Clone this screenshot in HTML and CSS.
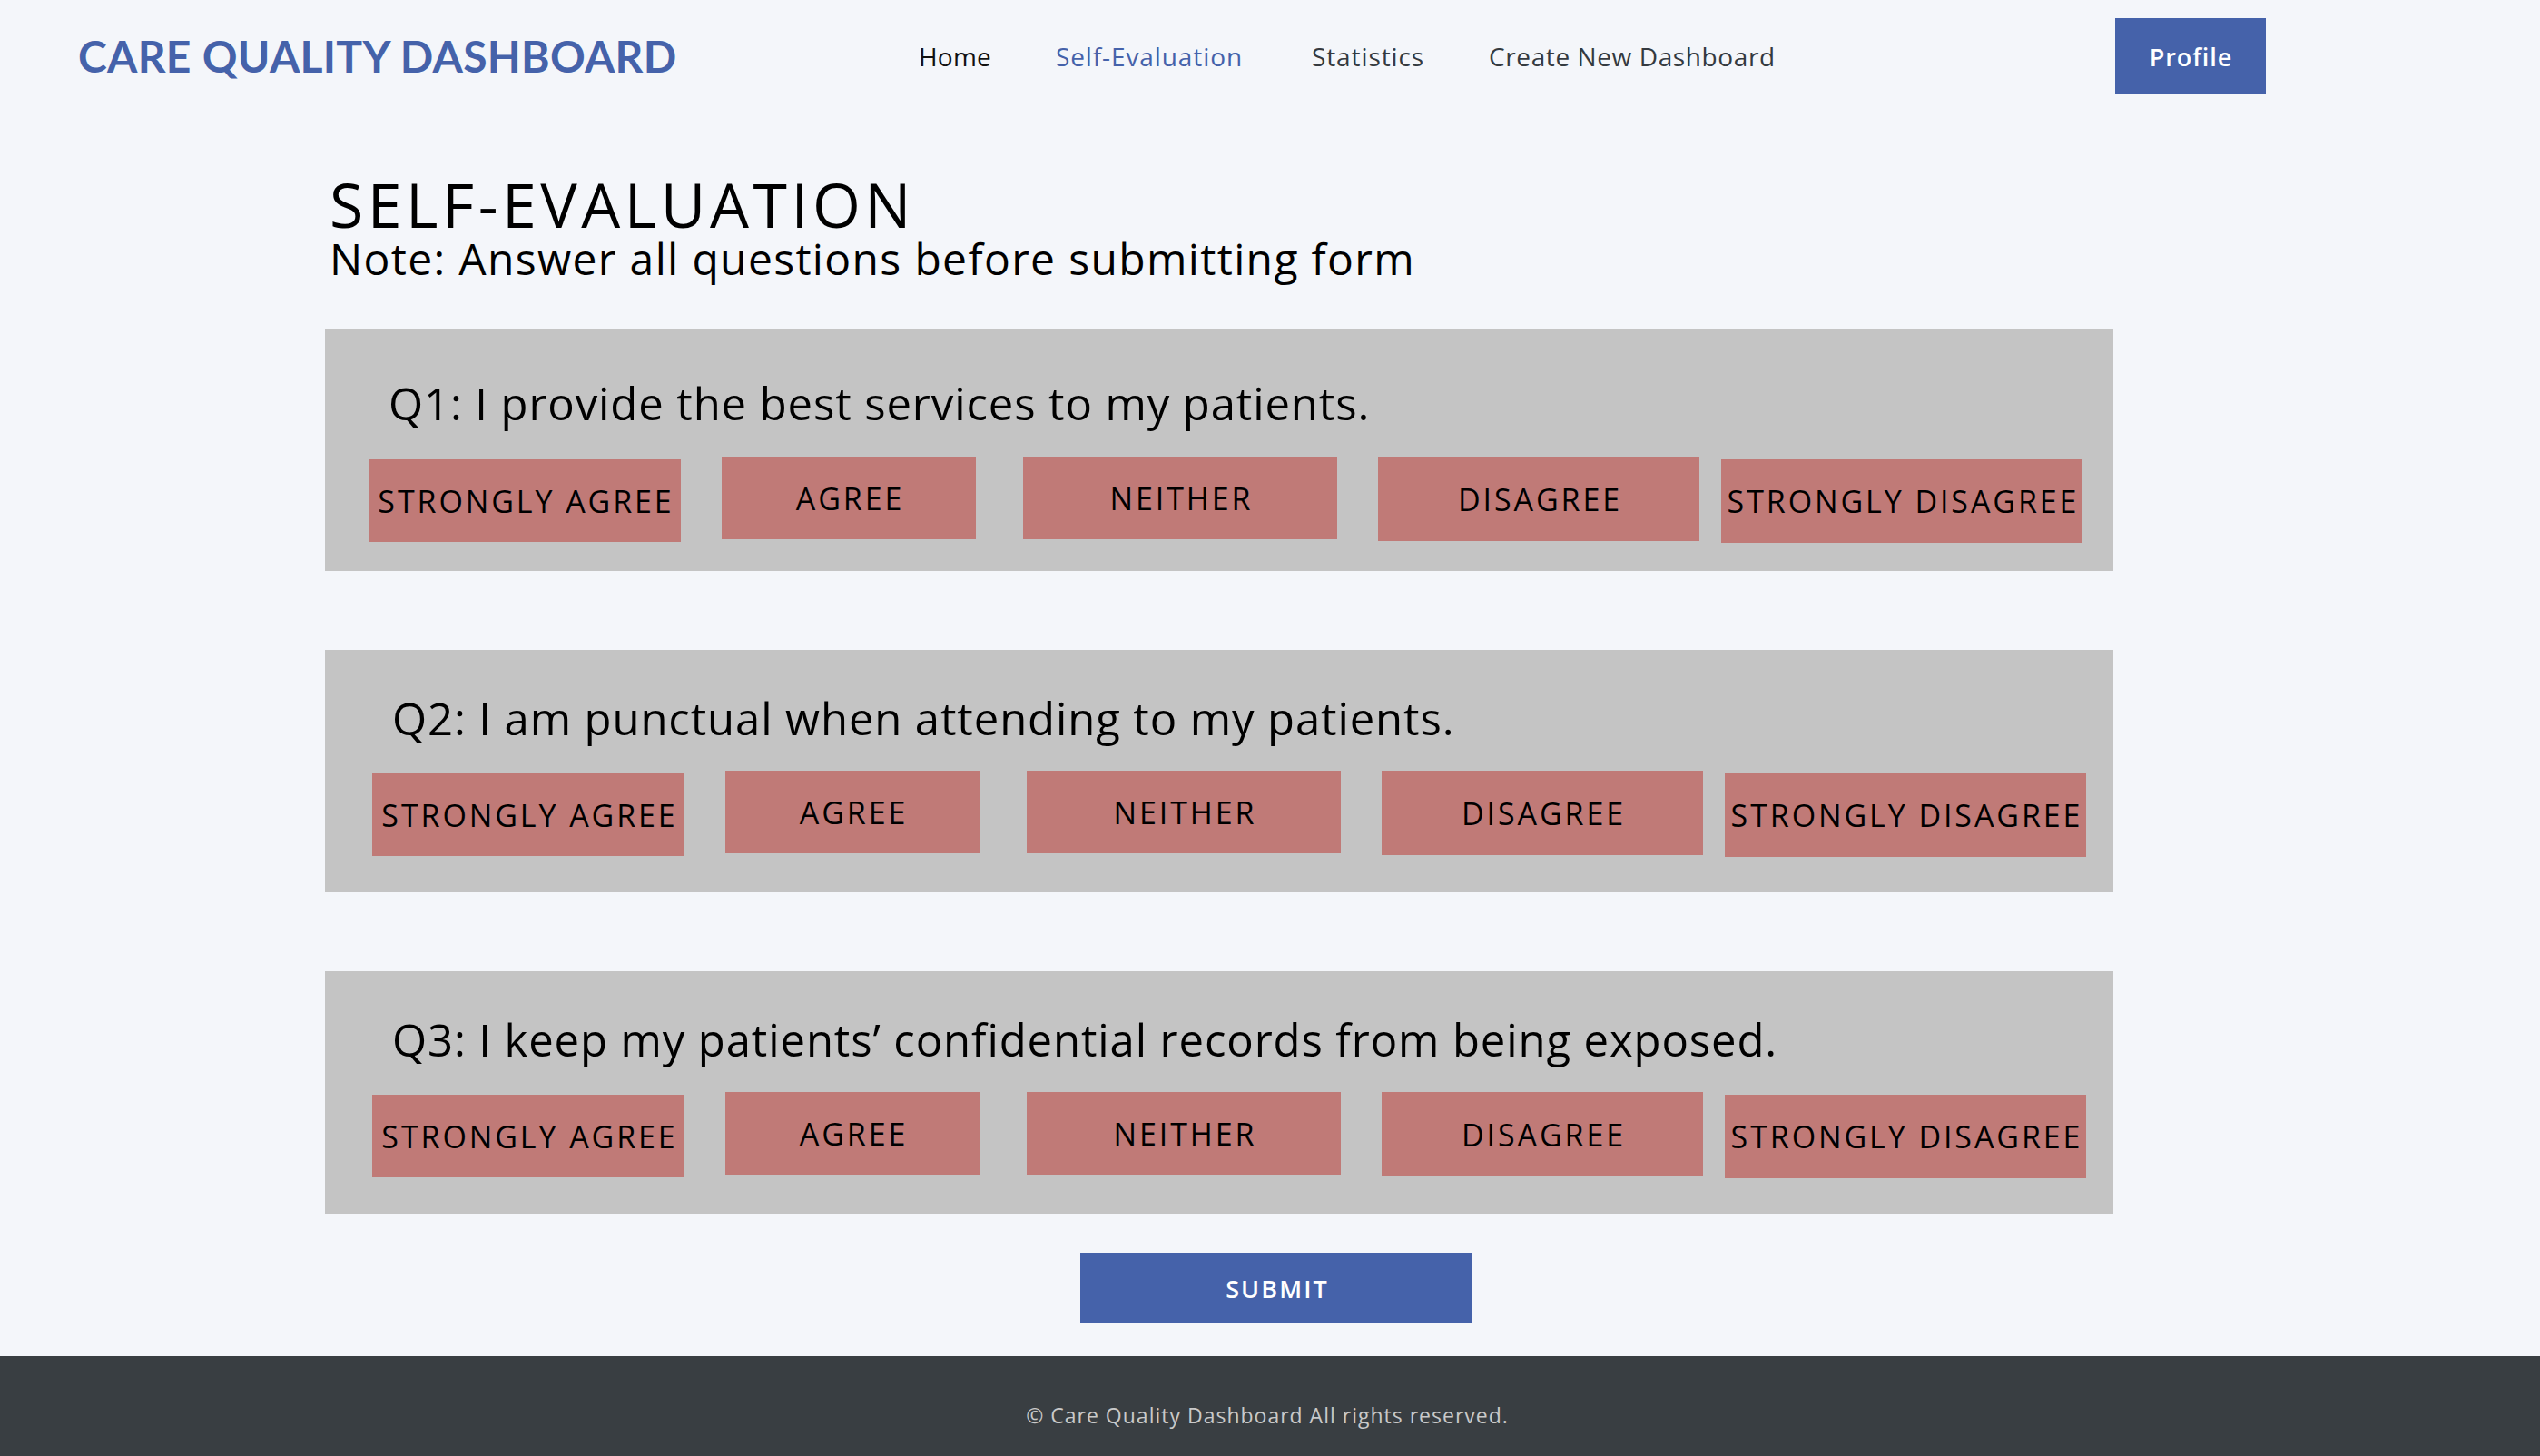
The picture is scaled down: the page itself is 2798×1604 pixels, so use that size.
FILE: index.html
```html
<!DOCTYPE html>
<html lang="en">
<head>
<meta charset="utf-8">
<title>Care Quality Dashboard - Self-Evaluation</title>
<link rel="stylesheet" href="styles.css">
</head>
<body>
<header class="topbar">
  <div class="brand">CARE QUALITY DASHBOARD</div>
  <nav class="nav">
    <a class="nav-link nav-link--home" href="#">Home</a>
    <a class="nav-link nav-link--active" href="#">Self-Evaluation</a>
    <a class="nav-link nav-link--stats" href="#">Statistics</a>
    <a class="nav-link nav-link--create" href="#">Create New Dashboard</a>
  </nav>
  <a class="profile-btn" href="#">Profile</a>
</header>

<main class="content">
  <h1 class="title">SELF-EVALUATION</h1>
  <p class="note">Note: Answer all questions before submitting form</p>

  <section class="card card--first">
    <h2 class="question">Q1: I provide the best services to my patients.</h2>
    <div class="options">
      <button class="opt opt--sa">STRONGLY AGREE</button>
      <button class="opt opt--a">AGREE</button>
      <button class="opt opt--n">NEITHER</button>
      <button class="opt opt--d">DISAGREE</button>
      <button class="opt opt--sd">STRONGLY DISAGREE</button>
    </div>
  </section>

  <section class="card">
    <h2 class="question">Q2: I am punctual when attending to my patients.</h2>
    <div class="options">
      <button class="opt opt--sa">STRONGLY AGREE</button>
      <button class="opt opt--a">AGREE</button>
      <button class="opt opt--n">NEITHER</button>
      <button class="opt opt--d">DISAGREE</button>
      <button class="opt opt--sd">STRONGLY DISAGREE</button>
    </div>
  </section>

  <section class="card">
    <h2 class="question">Q3: I keep my patients’ confidential records from being exposed.</h2>
    <div class="options">
      <button class="opt opt--sa">STRONGLY AGREE</button>
      <button class="opt opt--a">AGREE</button>
      <button class="opt opt--n">NEITHER</button>
      <button class="opt opt--d">DISAGREE</button>
      <button class="opt opt--sd">STRONGLY DISAGREE</button>
    </div>
  </section>

  <div class="submit-wrap">
    <button class="submit-btn">SUBMIT</button>
  </div>
</main>

<footer class="footer">© Care Quality Dashboard All rights reserved.</footer>
</body>
</html>
```

FILE: styles.css
```css
* { box-sizing: border-box; }

body {
  margin: 0;
  background: #f4f6fa;
  font-family: "Open Sans", Lato, sans-serif;
  color: #000;
}

/* Header */
.topbar {
  display: flex;
  align-items: center;
  padding: 20px 302px 0 86px;
  height: 104px;
}

.brand {
  flex: 0 0 926px;
  font-family: Lato, "Open Sans", sans-serif;
  font-weight: 700;
  font-size: 48px;
  line-height: 84px;
  color: #4562aa;
  letter-spacing: 0.3px;
}

.nav {
  display: flex;
  align-items: center;
}

.nav-link {
  font-size: 28px;
  line-height: 40px;
  letter-spacing: 0.9px;
  color: #343a40;
  text-decoration: none;
}

.nav-link--home { color: #111; letter-spacing: 0.2px; margin-right: 71px; }
.nav-link--active { color: #4562aa; margin-right: 76px; }
.nav-link--stats { margin-right: 71px; }
.nav-link--create { letter-spacing: 0.6px; }

.profile-btn {
  margin-left: auto;
  width: 166px;
  height: 84px;
  display: flex;
  align-items: center;
  justify-content: center;
  background: #4562aa;
  color: #fff;
  font-size: 27px;
  font-weight: 600;
  letter-spacing: 0.9px;
  text-indent: 0.9px;
  text-decoration: none;
}

/* Main */
.content {
  padding-left: 358px;
}

.title {
  margin: 87px 0 0 5px;
  font-size: 68px;
  line-height: 68px;
  font-weight: 400;
  letter-spacing: 4.5px;
}

.note {
  margin: 2px 0 53px 5px;
  font-size: 48px;
  line-height: 48px;
  letter-spacing: 1.35px;
}

.card {
  width: 1970px;
  height: 267px;
  background: #c4c4c4;
  padding-top: 45px;
  margin-bottom: 87px;
}

.card:last-of-type { margin-bottom: 0; }

.question {
  margin: 0 0 28px 74px;
  font-size: 49px;
  line-height: 60px;
  font-weight: 400;
  letter-spacing: 0.9px;
}

.options {
  display: flex;
  align-items: flex-start;
  margin-left: 52px;
}

.card--first { padding-top: 52px; }
.card--first .question { margin: 0 0 29px 70px; }
.card--first .options { margin-left: 48px; }

.opt {
  height: 91px;
  display: flex;
  align-items: center;
  justify-content: center;
  border: 0;
  padding: 0 0 0 3px;
  background: #c07a77;
  color: #000;
  font-family: "Open Sans", Lato, sans-serif;
  font-size: 34px;
  letter-spacing: 2.9px;
  white-space: nowrap;
}

.opt--sa { width: 344px; margin: 3px 45px 0 0; }
.opt--a { width: 280px; margin-right: 52px; }
.opt--n { width: 346px; margin-right: 45px; }
.opt--d { width: 354px; height: 93px; margin-right: 24px; }
.opt--sd { width: 398px; height: 92px; margin-top: 3px; }

.submit-wrap {
  display: flex;
  justify-content: center;
  padding: 43px 0 0 14px;
  margin-left: -358px;
}

.submit-btn {
  width: 432px;
  height: 78px;
  border: 0;
  padding: 0 0 0 2px;
  background: #4562aa;
  color: #fff;
  font-family: "Open Sans", Lato, sans-serif;
  font-size: 27px;
  font-weight: 600;
  letter-spacing: 2.1px;
}

/* Footer */
.footer {
  margin-top: 36px;
  height: 110px;
  background: #393e42;
  color: #c9c9c9;
  text-align: center;
  font-size: 23px;
  line-height: 28px;
  letter-spacing: 1px;
  padding: 51px 6px 0 0;
}
```
